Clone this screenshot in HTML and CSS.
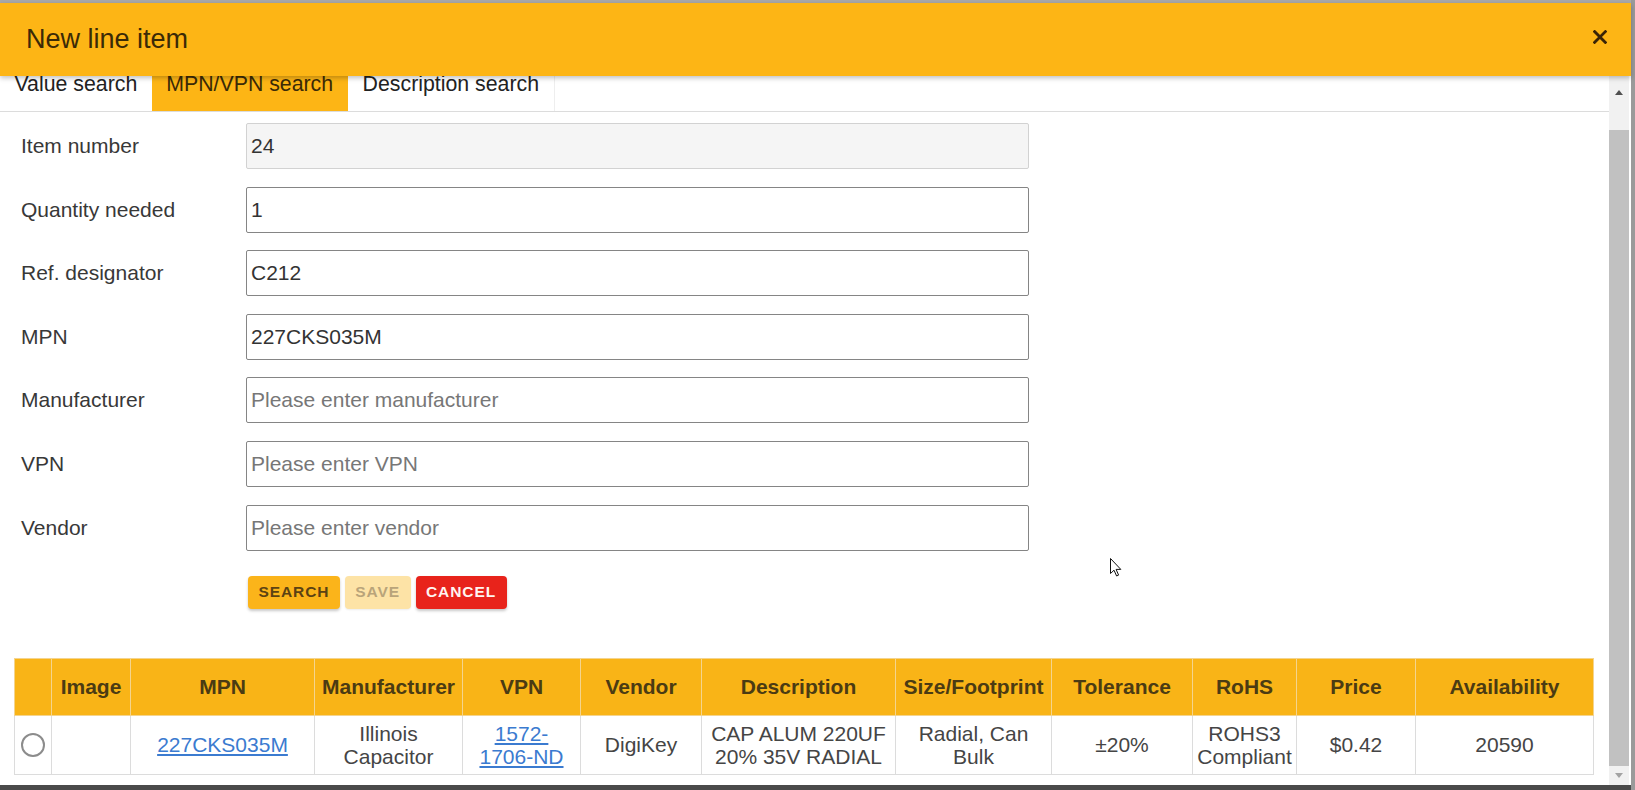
FILE: index.html
```html
<!DOCTYPE html>
<html lang="en">
<head>
<meta charset="utf-8">
<title>New line item</title>
<link rel="stylesheet" href="styles.css">
</head>
<body>
<div class="page">
  <div class="dialog">
    <header class="dlg-head">
      <h1 class="dlg-title">New line item</h1>
      <button class="dlg-close" aria-label="Close">
        <svg width="14" height="14" viewBox="0 0 14 14"><path d="M1.6 1.6L12.4 12.4M12.4 1.6L1.6 12.4" stroke="#3a2406" stroke-width="2.8" stroke-linecap="square" fill="none"/></svg>
      </button>
    </header>
    <div class="dlg-body">
      <div class="dlg-content">
        <nav class="tabs">
          <span class="tab">Value search</span>
          <span class="tab active">MPN/VPN search</span>
          <span class="tab last">Description search</span>
        </nav>
        <form class="form">
          <div class="field"><label>Item number</label><input class="ro" type="text" value="24" readonly></div>
          <div class="field"><label>Quantity needed</label><input type="text" value="1"></div>
          <div class="field"><label>Ref. designator</label><input type="text" value="C212"></div>
          <div class="field"><label>MPN</label><input type="text" value="227CKS035M"></div>
          <div class="field"><label>Manufacturer</label><input type="text" placeholder="Please enter manufacturer"></div>
          <div class="field"><label>VPN</label><input type="text" placeholder="Please enter VPN"></div>
          <div class="field"><label>Vendor</label><input type="text" placeholder="Please enter vendor"></div>
        </form>
        <div class="actions">
          <button class="btn btn-search">SEARCH</button>
          <button class="btn btn-save">SAVE</button>
          <button class="btn btn-cancel">CANCEL</button>
        </div>
        <table class="results">
          <colgroup>
            <col class="c-sel"><col class="c-img"><col class="c-mpn"><col class="c-man"><col class="c-vpn"><col class="c-ven"><col class="c-desc"><col class="c-size"><col class="c-tol"><col class="c-rohs"><col class="c-price"><col class="c-avail">
          </colgroup>
          <thead>
            <tr>
              <th></th><th>Image</th><th>MPN</th><th>Manufacturer</th><th>VPN</th><th>Vendor</th><th>Description</th><th>Size/Footprint</th><th>Tolerance</th><th>RoHS</th><th>Price</th><th>Availability</th>
            </tr>
          </thead>
          <tbody>
            <tr>
              <td><input class="radio" type="radio" name="pick"></td>
              <td></td>
              <td><a href="#">227CKS035M</a></td>
              <td>Illinois Capacitor</td>
              <td><a href="#">1572-<wbr><span class="nowrap">1706-ND</span></a></td>
              <td>DigiKey</td>
              <td>CAP ALUM 220UF 20% 35V RADIAL</td>
              <td>Radial, Can Bulk</td>
              <td>±20%</td>
              <td>ROHS3 Compliant</td>
              <td>$0.42</td>
              <td>20590</td>
            </tr>
          </tbody>
        </table>
      </div>
      <div class="scrollbar">
        <div class="sb-up"><span class="tri-up"></span></div>
        <div class="sb-gap"></div>
        <div class="sb-thumb"></div>
        <div class="sb-down"><span class="tri-down"></span></div>
      </div>
    </div>
  </div>
  <div class="edge"></div>
</div>
<svg class="cursor" width="12" height="19" viewBox="0 0 12 19"><path d="M0.5 0.5L0.5 15.5L4 12.2L6.6 18L8.6 17.1L6.1 11.4L10.8 11.4Z" fill="#fff" stroke="#111" stroke-width="1"/></svg>
</body>
</html>
```

FILE: styles.css
```css
html, body {
  margin: 0;
  padding: 0;
  height: 100%;
}

body {
  font-family: "Liberation Sans", Arial, sans-serif;
  overflow: hidden;
  background: #4a4a4a;
}

.page {
  display: flex;
  height: 790px;
  background: #4a4a4a;
}

.dialog {
  flex: 1;
  height: 785px;
  box-sizing: border-box;
  border-top: 3px solid #a9a9a9;
  background: #fff;
  display: flex;
  flex-direction: column;
}

.edge {
  width: 4px;
  background: #9a9a9a;
}

.dlg-head {
  flex: none;
  height: 73px;
  display: flex;
  align-items: center;
  justify-content: space-between;
  padding: 0 24px 0 26px;
  background: #fdb515;
  box-shadow: 0 2px 5px rgba(0, 0, 0, 0.25);
  position: relative;
  z-index: 2;
}

.dlg-title {
  margin: 0;
  font-size: 27px;
  font-weight: 400;
  color: #3b2a07;
}

.dlg-close {
  background: none;
  border: 0;
  padding: 0;
  width: 14px;
  height: 14px;
  display: flex;
  margin-top: -6px;
}

.dlg-body {
  flex: 1;
  display: flex;
  min-height: 0;
}

.dlg-content {
  flex: 1;
  min-width: 0;
}

/* tabs */
.tabs {
  display: flex;
  height: 41.5px;
  box-sizing: border-box;
  margin-top: -6px;
  border-bottom: 1px solid #dcdcdc;
}

.tab {
  padding: 2px 15px 0 14.5px;
  font-size: 21.3px;
  line-height: 24px;
  color: #222;
}

.tab.active {
  background: #fdb515;
  color: #3b2a07;
  padding-left: 14px;
}

.tab.last {
  border-right: 1px solid #eeeeee;
}

/* form */
.form {
  display: flex;
  flex-direction: column;
  gap: 17.6px;
  padding: 11.5px 0 0 21px;
  margin: 0;
}

.field {
  display: flex;
  align-items: center;
}

.field label {
  width: 225px;
  font-size: 21px;
  color: #383838;
}

.field input {
  width: 783px;
  height: 46px;
  box-sizing: border-box;
  border: 1px solid #858585;
  border-radius: 2px;
  padding: 0 4px;
  font-family: "Liberation Sans", Arial, sans-serif;
  font-size: 21px;
  color: #333;
  background: #fff;
  outline: none;
}

.field input::placeholder {
  color: #777;
}

.field input.ro {
  background: #f5f5f5;
  border-color: #d2d2d2;
}

/* buttons */
.actions {
  display: flex;
  gap: 5px;
  padding-left: 248px;
  margin-top: 25.4px;
}

.btn {
  height: 33px;
  padding: 0 10.5px;
  border: 0;
  border-radius: 4px;
  font-family: "Liberation Sans", Arial, sans-serif;
  font-weight: 700;
  font-size: 15.5px;
  letter-spacing: 0.9px;
  box-shadow: 0 2px 3px rgba(0, 0, 0, 0.22);
}

.btn-search {
  background: #fbb41a;
  color: #5b4213;
}

.btn-save {
  background: #fde3a6;
  color: #b9a47a;
  box-shadow: 0 1px 2px rgba(0, 0, 0, 0.08);
}

.btn-cancel {
  background: #e8231b;
  color: #fff4f0;
}

/* table */
.results {
  margin: 49px 0 0 14px;
  width: 1579px;
  border-collapse: collapse;
  table-layout: fixed;
}

.c-sel { width: 37px; }
.c-img { width: 79px; }
.c-mpn { width: 184px; }
.c-man { width: 148px; }
.c-vpn { width: 118px; }
.c-ven { width: 121px; }
.c-desc { width: 194px; }
.c-size { width: 156px; }
.c-tol { width: 141px; }
.c-rohs { width: 104px; }
.c-price { width: 119px; }
.c-avail { width: 178px; }

.results th {
  height: 56px;
  padding: 0 4px;
  background: #f9b417;
  color: #4b3b13;
  font-size: 21px;
  font-weight: 700;
  text-align: center;
  border: 1px solid #f4d48e;
}

.results td {
  height: 58px;
  padding: 0 4px;
  font-size: 21px;
  line-height: 23px;
  color: #454545;
  text-align: center;
  border: 1px solid #dcdcdc;
}

.results a {
  color: #3b7bd0;
  text-decoration: underline;
}

.nowrap {
  white-space: nowrap;
}

.radio {
  appearance: none;
  -webkit-appearance: none;
  display: block;
  width: 24px;
  height: 24px;
  margin: 0 auto;
  box-sizing: border-box;
  border: 2px solid #8c8c8c;
  border-radius: 50%;
  background: #fff;
}

/* scrollbar */
.scrollbar {
  width: 20px;
  margin-right: 2px;
  background: #f1f1f1;
  display: flex;
  flex-direction: column;
}

.sb-up {
  height: 28px;
  display: flex;
  align-items: center;
  justify-content: center;
}

.sb-gap {
  height: 26px;
}

.sb-thumb {
  height: 636px;
  background: #c1c1c1;
}

.sb-down {
  flex: 1;
  display: flex;
  align-items: center;
  justify-content: center;
}

.tri-up {
  width: 0;
  height: 0;
  border-left: 4.5px solid transparent;
  border-right: 4.5px solid transparent;
  border-bottom: 5px solid #505050;
  margin-top: 4px;
}

.tri-down {
  width: 0;
  height: 0;
  border-left: 4.5px solid transparent;
  border-right: 4.5px solid transparent;
  border-top: 5px solid #a3a3a3;
}

.cursor {
  position: absolute;
  left: 1110px;
  top: 558px;
}
```
